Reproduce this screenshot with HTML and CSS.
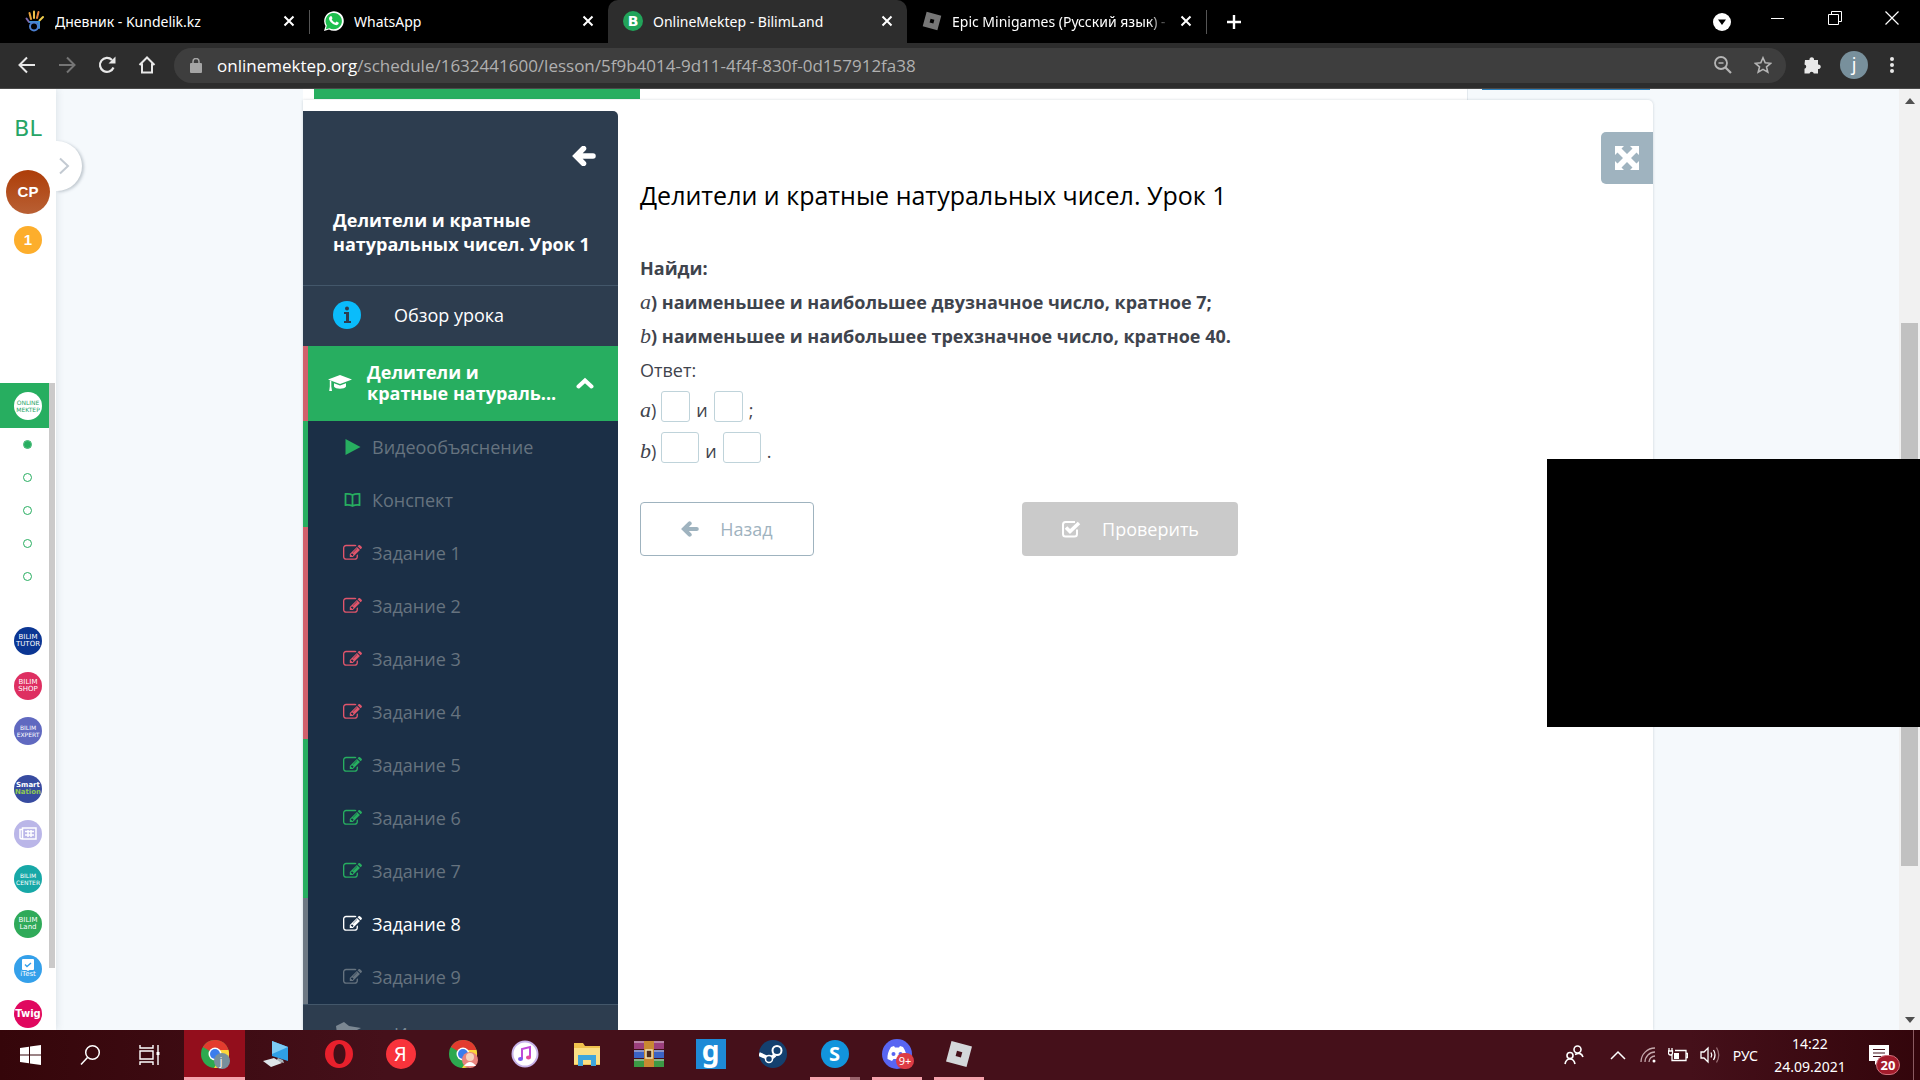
FILE: index.html
```
<!DOCTYPE html>
<html lang="ru">
<head>
    <meta charset="utf-8">
    <title>OnlineMektep - BilimLand</title>
    <link rel="stylesheet" href="styles.css">
</head>
<body>
    <!-- shared icons -->
    <svg class="defs" width="0" height="0">
        <symbol id="i-x" viewBox="0 0 12 12"><path d="M1.5 1.5l9 9M10.500 1.500l-9 9" stroke="currentColor" stroke-width="2" fill="none"/></symbol>
        <symbol id="i-edit" viewBox="0 0 1792 1792"><path fill="currentColor" d="M888 1184l116-116-152-152-116 116v56h96v96h56zm440-720q-16-16-33 1l-350 350q-17 17-1 33t33-1l350-350q17-17 1-33zm80 594v190q0 119-84.500 203.500t-203.500 84.500h-832q-119 0-203.500-84.500t-84.500-203.500v-832q0-119 84.500-203.500t203.500-84.500h832q63 0 117 25 15 7 18 23 3 17-9 29l-49 49q-14 14-32 8-23-6-45-6h-832q-66 0-113 47t-47 113v832q0 66 47 113t113 47h832q66 0 113-47t47-113v-126q0-13 9-22l64-64q15-15 35-7t20 29zm-96-738l288 288-672 672h-288v-288zm444 132l-92 92-288-288 92-92q28-28 68-28t68 28l152 152q28 28 28 68t-28 68z"/></symbol>
        <symbol id="i-left" viewBox="0 0 24 20"><path d="M11.500 2.500L4 10l7.500 7.500M5 10h16" stroke="currentColor" stroke-width="5.500" stroke-linecap="round" fill="none"/><path d="M1 10l6-6v12z" fill="currentColor"/></symbol>
        <symbol id="i-roblox" viewBox="0 0 28 28"><path fill="currentColor" fill-rule="evenodd" d="M6.500 1L27 6.500 21.500 27 1 21.500zM12 10.800l-1.400 5.200 5.300 1.400 1.400-5.200z"/></symbol>
        <symbol id="i-chrome" viewBox="0 0 30 30"><circle cx="15" cy="15" r="14" fill="#2da94f"/><path d="M15 15L2.900 8A14 14 0 0 1 28.500 11z" fill="#e33b2e"/><path d="M28.500 11A14 14 0 0 1 14 29l7-11-3-7z" fill="#fdd63a"/><circle cx="15" cy="15" r="6.500" fill="#fff"/><circle cx="15" cy="15" r="5" fill="#3b7ded"/></symbol>
    </svg>

    <header class="browser">
        <div class="tabs">
            <div class="tab">
                <svg width="20" height="22" viewBox="0 0 20 22" fill="none" stroke-width="2" stroke-linecap="round"><path d="M6 9L4.500 3" stroke="#e9a13b"/><path d="M9 8V1.500" stroke="#f0c04a"/><path d="M12 8l1.500-6" stroke="#e8843c"/><path d="M14.500 10.500L18 7" stroke="#f2d04d"/><path d="M4 12L1.500 8.500" stroke="#7e6bb0"/><path d="M5 12h9v6" stroke="#3d8fd0"/><circle cx="9" cy="16.500" r="4" stroke="#4c7fd0"/></svg>
                <span class="tab-title">Дневник - Kundelik.kz</span>
                <button class="tab-close" aria-label="Закрыть"><svg width="12" height="12"><use href="#i-x"/></svg></button>
            </div>
            <div class="tab divided">
                <svg width="20" height="20" viewBox="0 0 20 20"><path d="M0 20l1.500-5A9.800 9.800 0 1 1 5 18.500z" fill="#fff"/><path d="M1.800 18.200l1-3.600A8.200 8.200 0 1 1 5.500 17.200z" fill="#1fbf4f"/><path d="M6 5.500c.8-.8 1.500-.7 1.900.2l.6 1.500-.8 1.300c.9 1.600 2 2.500 3.700 3.200l1.200-1.200 2.200 1.200c0 2-1.800 2.700-3.300 2.400C8 13.300 5 9.600 5 7.600c0-.8.400-1.500 1-2.100z" fill="#fff"/></svg>
                <span class="tab-title">WhatsApp</span>
                <button class="tab-close" aria-label="Закрыть"><svg width="12" height="12"><use href="#i-x"/></svg></button>
            </div>
            <div class="tab active">
                <span class="bl-fav">B</span>
                <span class="tab-title">OnlineMektep - BilimLand</span>
                <button class="tab-close" aria-label="Закрыть"><svg width="12" height="12"><use href="#i-x"/></svg></button>
            </div>
            <div class="tab">
                <svg class="gray" width="20" height="20"><use href="#i-roblox"/></svg>
                <span class="tab-title fade">Epic Minigames (Русский язык) -</span>
                <button class="tab-close" aria-label="Закрыть"><svg width="12" height="12"><use href="#i-x"/></svg></button>
            </div>
            <button class="new-tab divided" aria-label="Новая вкладка"><svg width="16" height="16" viewBox="0 0 16 16"><path d="M8 1v14M1 8h14" stroke="#fff" stroke-width="2.400"/></svg></button>
            <div class="window-buttons">
                <svg class="guest" width="18" height="18" viewBox="0 0 18 18"><circle cx="9" cy="9" r="9" fill="#fff"/><path d="M5 6.500h8L9 12z" fill="#000"/></svg>
                <button aria-label="Свернуть"><svg width="14" height="14" viewBox="0 0 14 14"><path d="M0 7.500h13" stroke="#fff"/></svg></button>
                <button aria-label="Развернуть"><svg width="14" height="14" viewBox="0 0 14 14"><path d="M.5 3.500h10v10H.5zM3.500 3.500v-3h10v10h-3" stroke="#fff" fill="none"/></svg></button>
                <button aria-label="Закрыть"><svg width="14" height="14" viewBox="0 0 14 14"><path d="M.5.5l13 13M13.500.5l-13 13" stroke="#fff" stroke-width="1.200"/></svg></button>
            </div>
        </div>
        <div class="toolbar">
            <button aria-label="Назад"><svg width="18" height="18" viewBox="0 0 18 18"><path d="M17 9H2M9 1.500L1.500 9 9 16.500" stroke="#e8e8e8" stroke-width="2" fill="none"/></svg></button>
            <button aria-label="Вперёд"><svg width="18" height="18" viewBox="0 0 18 18"><path d="M1 9h15M9 1.500L16.500 9 9 16.500" stroke="#757575" stroke-width="2" fill="none"/></svg></button>
            <button aria-label="Обновить"><svg width="18" height="18" viewBox="0 0 18 18"><path d="M15.500 11.500A7 7 0 1 1 14 4" stroke="#e8e8e8" stroke-width="2.200" fill="none"/><path d="M17.500.5v7h-7z" fill="#e8e8e8"/></svg></button>
            <button aria-label="Домой"><svg width="18" height="18" viewBox="0 0 18 18"><path d="M1.500 9L9 1.500 16.500 9M4 7.500V16.500h10V7.500" stroke="#e8e8e8" stroke-width="2" fill="none"/></svg></button>
            <div class="omnibox">
                <svg width="12" height="15" viewBox="0 0 12 15"><rect y="5" width="12" height="10" rx="1" fill="#a5a5a5"/><path d="M3 6V3.500a3 3 0 0 1 6 0V6" stroke="#a5a5a5" stroke-width="1.500" fill="none"/></svg>
                <span class="url">onlinemektep.org<span>/schedule/1632441600/lesson/5f9b4014-9d11-4f4f-830f-0d157912fa38</span></span>
                <svg width="18" height="18" viewBox="0 0 18 18" fill="none" stroke="#b5b5b5"><circle cx="7" cy="7" r="6" stroke-width="1.800"/><path d="M11.500 11.500l5.500 5.500" stroke-width="2.200"/><path d="M4.500 7h5" stroke-width="1.500"/></svg>
                <svg width="18" height="18" viewBox="0 0 18 18"><path d="M9 1.800l2.200 5 5.400.5-4.100 3.600 1.300 5.300L9 13.400l-4.800 2.800 1.300-5.300-4.100-3.600 5.400-.5z" stroke="#b5b5b5" stroke-width="1.600" fill="none"/></svg>
            </div>
            <button aria-label="Расширения"><svg width="18" height="18" viewBox="0 0 18 18"><path fill="#e8e8e8" d="M1 4h4.500a2.300 2.300 0 1 1 4.500 0H14v4.500a2.300 2.300 0 1 1 0 4.500v4.500H9.800a2.200 2.200 0 0 0-4.300 0H.5v-4.800a2.200 2.200 0 0 0 0-4.300z"/></svg></button>
            <span class="profile">j</span>
            <button aria-label="Меню"><svg width="4" height="18" viewBox="0 0 4 18" fill="#e8e8e8"><circle cx="2" cy="3" r="2"/><circle cx="2" cy="9" r="2"/><circle cx="2" cy="15" r="2"/></svg></button>
        </div>
    </header>

    <div class="page">
        <aside class="rail">
            <div class="rail-logo">BL</div>
            <div class="user">CP</div>
            <div class="badge">1</div>
            <div class="rail-scroll">
                <nav class="rail-list">
                    <a class="rail-item current"><span class="disc online">ONLINE<br>MEKTEP</span></a>
                    <a class="rail-dot on"></a>
                    <a class="rail-dot"></a>
                    <a class="rail-dot"></a>
                    <a class="rail-dot"></a>
                    <a class="rail-dot"></a>
                    <a class="rail-item group-first"><span class="disc tutor">BILIM<br>TUTOR</span></a>
                    <a class="rail-item"><span class="disc shop">BILIM<br>SHOP</span></a>
                    <a class="rail-item"><span class="disc expert">BILIM<br>EXPERT</span></a>
                    <a class="rail-item group-second"><span class="disc smart">Smart<br><b>Nation</b></span></a>
                    <a class="rail-item"><span class="disc news"><svg width="18" height="13" viewBox="0 0 18 13" fill="none" stroke="#fff" stroke-width="1.500"><path d="M3.500 1h13.500v11H3.500zM3.500 2.500H1V10.500c0 1 1 1.500 2.500 1.500M6 4.500h9M6 8h9M9 3v7M12 3v7"/></svg></span></a>
                    <a class="rail-item"><span class="disc center">BILIM<br>CENTER</span></a>
                    <a class="rail-item"><span class="disc land">BILIM<br>Land</span></a>
                    <a class="rail-item"><span class="disc itest"><svg width="12" height="12" viewBox="0 0 12 12"><path d="M1 0h10q1 0 1 1v9q0 1-1 1H7.500L6 12 4.500 11H1q-1 0-1-1V1q0-1 1-1z" fill="#fff"/><path d="M3 5.500l2 2L9 4" stroke="#34a0ea" stroke-width="1.400" fill="none"/></svg>iTest</span></a>
                    <a class="rail-item"><span class="disc twig">Twig</span></a>
                </nav>
                <div class="rail-bar"></div>
            </div>
            <button class="expand" aria-label="Развернуть меню"><svg width="12" height="18" viewBox="0 0 12 18"><path d="M2 1.500L10 9l-8 7.500" stroke="#c3cad2" stroke-width="2" fill="none"/></svg></button>
        </aside>

        <main class="main">
            <div class="previous">
                <div class="previous-card"><div class="previous-done"></div></div>
                <div class="previous-link"></div>
            </div>
            <section class="lesson">
                <aside class="plan">
                    <div class="plan-head">
                        <button class="plan-hide" aria-label="Скрыть"><svg width="24" height="20"><use href="#i-left"/></svg></button>
                        <h2>Делители и кратные натуральных чисел. Урок 1</h2>
                    </div>
                    <a class="plan-overview">
                        <svg width="28" height="28" viewBox="0 0 28 28"><circle cx="14" cy="14" r="14" fill="#0abcfb"/><path d="M11 11h5v9h2v2h-7v-2h2v-7h-2z" fill="#2d3d4f"/><circle cx="14" cy="7.500" r="2" fill="#2d3d4f"/></svg>
                        <span>Обзор урока</span>
                    </a>
                    <button class="plan-topic">
                        <svg width="24" height="18" viewBox="0 0 24 18" fill="#fff"><path d="M12 1l12 4.500-12 4.500L0 5.500z"/><path d="M6 9.300l6 2.200 6-2.200v3.200c-1.500 3-10.500 3-12 0zM1.800 6.500h1.500v6l.7 4.500H1.200l.6-4.500z"/></svg>
                        <span>Делители и<br>кратные натураль...</span>
                        <svg width="18" height="12" viewBox="0 0 18 12"><path d="M2.500 9.500L9 3.500l6.500 6" stroke="#fff" stroke-width="4" stroke-linecap="round" fill="none"/></svg>
                    </button>
                    <nav class="steps">
                        <a class="step done"><svg width="18" height="18" viewBox="0 0 18 18"><path d="M2 1l15 8-15 8z" fill="currentColor"/></svg>Видеообъяснение</a>
                        <a class="step done"><svg width="18" height="18" viewBox="0 0 18 18"><path d="M2 3q4-.5 7 1 3-1.500 7-1v11q-4-.5-7 1-3-1.500-7-1zM9 4v11" stroke="currentColor" stroke-width="1.800" fill="none"/></svg>Конспект</a>
                        <a class="step failed"><svg width="20" height="20"><use href="#i-edit"/></svg>Задание 1</a>
                        <a class="step failed"><svg width="20" height="20"><use href="#i-edit"/></svg>Задание 2</a>
                        <a class="step failed"><svg width="20" height="20"><use href="#i-edit"/></svg>Задание 3</a>
                        <a class="step failed"><svg width="20" height="20"><use href="#i-edit"/></svg>Задание 4</a>
                        <a class="step done"><svg width="20" height="20"><use href="#i-edit"/></svg>Задание 5</a>
                        <a class="step done"><svg width="20" height="20"><use href="#i-edit"/></svg>Задание 6</a>
                        <a class="step done"><svg width="20" height="20"><use href="#i-edit"/></svg>Задание 7</a>
                        <a class="step here"><svg width="20" height="20"><use href="#i-edit"/></svg>Задание 8</a>
                        <a class="step"><svg width="20" height="20"><use href="#i-edit"/></svg>Задание 9</a>
                    </nav>
                    <a class="plan-more">
                        <svg width="26" height="18" viewBox="0 0 26 18"><path d="M0 4l8-4 5 4 12 2-6 3v9H2z" fill="#7b8792"/></svg>
                        <span>Итоги</span>
                    </a>
                </aside>

                <article class="task">
                    <h1>Делители и кратные натуральных чисел. Урок 1</h1>
                    <div class="question">
                        <p>Найди:</p>
                        <p><i>a</i>) наименьшее и наибольшее двузначное число, кратное 7;</p>
                        <p><i>b</i>) наименьшее и наибольшее трехзначное число, кратное 40.</p>
                    </div>
                    <p class="answer-label">Ответ:</p>
                    <div class="answer"><span><i>a</i>)</span><input type="text" aria-label="a, наименьшее"><span class="and">и</span><input type="text" aria-label="a, наибольшее"><span class="and">;</span></div>
                    <div class="answer wide"><span><i>b</i>)</span><input type="text" aria-label="b, наименьшее"><span class="and">и</span><input type="text" aria-label="b, наибольшее"><span class="and">.</span></div>
                    <div class="actions">
                        <button class="back"><svg width="18" height="16"><use href="#i-left"/></svg>Назад</button>
                        <button class="check"><svg width="20" height="18" viewBox="0 0 20 18"><path d="M16 9.500V14a2.500 2.500 0 0 1-2.500 2.500h-9A2.500 2.500 0 0 1 2 14V4.500A2.500 2.500 0 0 1 4.500 2H14" stroke="#fff" stroke-width="2" fill="none"/><path d="M5 7.500l4 4 9-8.500" stroke="#fff" stroke-width="3.600" fill="none"/></svg>Проверить</button>
                    </div>
                </article>
                <button class="fullscreen" aria-label="На весь экран"><svg width="24" height="24" viewBox="0 0 24 24"><path d="M0 0h9L6.500 2.500 12 8l5.500-5.500L15 0h9v9l-2.500-2.500L16 12l5.500 5.500L24 15v9h-9l2.500-2.500L12 16l-5.500 5.500L9 24H0v-9l2.500 2.500L8 12 2.500 6.500 0 9z" fill="#fff"/></svg></button>
            </section>
        </main>

        <div class="scrollbar">
            <svg width="10" height="6" viewBox="0 0 10 6"><path d="M5 0l5 6H0z" fill="#505050"/></svg>
            <div class="scroll-track"><div class="scroll-thumb"></div></div>
            <svg width="10" height="6" viewBox="0 0 10 6"><path d="M5 6L0 0h10z" fill="#505050"/></svg>
        </div>
        <div class="blackout"></div>
    </div>

    <footer class="taskbar">
        <button class="sys" aria-label="Пуск"><svg width="21" height="20" viewBox="0 0 21 20" fill="#fff"><path d="M0 3l9-1.300v7.800H0zM10 1.500L21 0v9.500H10zM0 10.500h9v7.800L0 17zM10 10.500h11V20l-11-1.500z"/></svg></button>
        <button class="sys" aria-label="Поиск"><svg width="22" height="22" viewBox="0 0 22 22" fill="none" stroke="#fff" stroke-width="1.500"><circle cx="13.500" cy="8.500" r="6.800"/><path d="M8.500 13.500L2 20.500"/></svg></button>
        <button class="sys" aria-label="Представление задач"><svg width="22" height="20" viewBox="0 0 22 20" fill="none" stroke="#fff" stroke-width="1.400"><path d="M1 0v3h13V0M1 6h13v8H1zM1 20v-3h13v3M19 0v20"/><path d="M17.500 7h3v3h-3z" fill="#fff" stroke="none"/></svg></button>
        <div class="apps">
            <button class="app open front" aria-label="Chrome"><svg width="30" height="30"><use href="#i-chrome"/><circle cx="22" cy="22" r="8" fill="#78909c"/></svg><span class="app-tag">j</span></button>
            <button class="app" aria-label="Компьютер"><svg width="28" height="28" viewBox="0 0 28 28"><path d="M9 1l16 6v14L9 16z" fill="#2f9fe6"/><path d="M9 1l16 6L9 14z" fill="#7dcbf5"/><path d="M15 18l5 2 1 3-8-2z" fill="#aab4bb"/><path d="M0 21l11-3 8 5-11 4z" fill="#dfe5e9"/></svg></button>
            <button class="app" aria-label="Opera"><svg width="30" height="30" viewBox="0 0 30 30"><path fill="#e8202c" fill-rule="evenodd" d="M15 1a14 14 0 1 1 0 28 14 14 0 0 1 0-28zM15.500 5c-4 0-6 5-6 10s2 10 6 10 6-5 6-10-2-10-6-10z"/></svg></button>
            <button class="app" aria-label="Яндекс"><span class="round ya">Я</span></button>
            <button class="app" aria-label="Chrome"><svg width="30" height="30"><use href="#i-chrome"/><circle cx="22" cy="21" r="8" fill="#e9857e"/><circle cx="22" cy="18" r="4" fill="#f7d4bd"/><path d="M16 27q6-8 12 0z" fill="#fff"/></svg></button>
            <button class="app" aria-label="iTunes"><svg width="28" height="28" viewBox="0 0 28 28"><circle cx="14" cy="14" r="12.500" fill="#fff" stroke="#c7b3ea" stroke-width="2"/><path d="M11 19V9l8-2v10" stroke="#c04bd8" stroke-width="2" fill="none"/><ellipse cx="9.500" cy="19" rx="2.500" ry="2" fill="#7a5cf0"/><ellipse cx="17.500" cy="17.500" rx="2.500" ry="2" fill="#e8489b"/></svg></button>
            <button class="app" aria-label="Проводник"><svg width="28" height="24" viewBox="0 0 28 24"><path d="M1 1h9l2 3h15v19H1z" fill="#f0c24e"/><path d="M1 6h26v16H1z" fill="#fbdf85"/><path d="M5 24V13h18v11h-5v-6h-8v6z" fill="#3fa6dc"/></svg></button>
            <button class="app" aria-label="WinRAR"><svg width="30" height="26" viewBox="0 0 30 26"><path d="M0 0h30v8H0z" fill="#9c3f7c"/><path d="M0 9h30v8H0z" fill="#3b63c4"/><path d="M0 18h30v8H0z" fill="#3c9a45"/><path d="M0 1h30M0 10h30M0 19h30" stroke="#d8c9cf"/><path d="M10 0h10v26H10z" fill="#c88932"/><path d="M12 9h6v8h-6z" fill="#4a2b1c" stroke="#f0dfae" stroke-width="1.500"/></svg></button>
            <button class="app" aria-label="G"><span class="square-g">g</span></button>
            <button class="app" aria-label="Steam"><svg width="28" height="28" viewBox="0 0 28 28"><circle cx="14" cy="14" r="14" fill="#14406f"/><circle cx="18" cy="10.500" r="4.500" stroke="#fff" stroke-width="2" fill="none"/><path d="M0 14l11 5 5-4" stroke="#fff" stroke-width="4" fill="none"/><circle cx="10" cy="19" r="3.500" stroke="#fff" stroke-width="1.500" fill="#14406f"/></svg></button>
            <button class="app open stacked" aria-label="Skype"><span class="round skype">S</span></button>
            <button class="app open" aria-label="Discord"><svg width="30" height="30" viewBox="0 0 30 30"><circle cx="15" cy="15" r="15" fill="#5865f2"/><path d="M9 8l3-1 1 1.500h4L18 7l3 1q4 6 3.500 12L20 22l-1.500-2h-7L10 22l-4.500-2Q5 14 9 8z" fill="#fff"/><circle cx="11.500" cy="15" r="2" fill="#5865f2"/><circle cx="18.500" cy="15" r="2" fill="#5865f2"/></svg><span class="app-tag count">9+</span></button>
            <button class="app open" aria-label="Roblox"><svg class="silver" width="28" height="28"><use href="#i-roblox"/></svg></button>
        </div>
        <div class="tray">
            <svg width="20" height="20" viewBox="0 0 20 20" fill="none" stroke="#fff" stroke-width="1.600"><circle cx="13.500" cy="4.500" r="3.500"/><circle cx="6" cy="10.500" r="3"/><path d="M1 19q1-5 5-5t5 5M11 9.500q6-3 8 2.500"/></svg>
            <svg width="16" height="10" viewBox="0 0 16 10"><path d="M1 9l7-7 7 7" stroke="#fff" stroke-width="1.500" fill="none"/></svg>
            <svg width="16" height="16" viewBox="0 0 16 16" fill="none" stroke="#c5a9ad" stroke-width="1.300"><path d="M1 15A14 14 0 0 1 15 1M5 15A10 10 0 0 1 15 5M9 15a6 6 0 0 1 6-6" /><circle cx="14" cy="14" r="1.500" fill="#fff" stroke="none"/></svg>
            <svg width="20" height="14" viewBox="0 0 20 14" fill="none" stroke="#fff" stroke-width="1.300"><path d="M4 7v5.500h14V2.500H7M18.500 5.500h1v4h-1M1 0v3M4 0v3M.5 3h4v2a2 2 0 0 1-4 0z"/><path d="M6 5h5v6H6z" fill="#fff" stroke="none"/></svg>
            <svg width="20" height="18" viewBox="0 0 20 18" fill="none" stroke="#fff" stroke-width="1.300"><path d="M1 6h3l4-4v14l-4-4H1zM11 6.500q1.500 2.500 0 5M13.500 4q3 5 0 10"/><path d="M16.500 1.500q4.500 7.500 0 15" stroke="#9a7076"/></svg>
            <span class="lang">РУС</span>
            <div class="clock">14:22<br>24.09.2021</div>
            <div class="notes">
                <svg width="20" height="20" viewBox="0 0 20 20"><path d="M0 0h20v16H10l-4 4v-4H0z" fill="#fff"/><path d="M4 4.500h12M4 8h12M4 11.500h8" stroke="#45101a" stroke-width="1.200"/></svg>
                <span class="notes-count">20</span>
            </div>
        </div>
    </footer>
</body>
</html>
```

FILE: styles.css
```
* {
    box-sizing: border-box;
}

body {
    margin: 0;
    height: 100vh;
    display: flex;
    flex-direction: column;
    overflow: hidden;
    font-family: "Open Sans", "Noto Sans", sans-serif;
    font-size: 18px;
    color: #3f444d;
}

svg {
    display: block;
    flex: none;
}

.defs {
    position: absolute;
}

button {
    border: none;
    background: none;
    padding: 0;
    margin: 0;
    font: inherit;
    color: inherit;
    cursor: pointer;
    display: flex;
    align-items: center;
    justify-content: center;
}

h1, h2, p {
    margin: 0;
}

/* browser */
.browser {
    flex: none;
    background: #2d2d2d;
    border-bottom: 1px solid #4a4a4a;
    font-family: "Noto Sans", sans-serif;
    color: #fff;
}

.tabs {
    display: flex;
    height: 43px;
    background: #000;
    padding-left: 10px;
}

.tab {
    width: 299px;
    display: flex;
    align-items: center;
    gap: 10px;
    padding: 0 14px 1px 15px;
    font-size: 14px;
    white-space: nowrap;
}

.tab.active {
    background: #2d2d2d;
    border-radius: 10px 10px 0 0;
}

.tab-title {
    flex: 1;
    min-width: 0;
    overflow: hidden;
}

.fade {
    -webkit-mask-image: linear-gradient(90deg, #000 90%, transparent);
    mask-image: linear-gradient(90deg, #000 90%, transparent);
}

.divided {
    background: linear-gradient(#555, #555) left center / 1px 24px no-repeat;
}

.gray {
    color: #777;
}

.silver {
    color: #d4d7da;
}

.bl-fav {
    width: 20px;
    height: 20px;
    border-radius: 50%;
    background: #22a45a;
    font: bold 14px/20px "DejaVu Sans", sans-serif;
    text-align: center;
}

.new-tab {
    width: 56px;
}

.window-buttons {
    margin-left: auto;
    display: flex;
    height: 36px;
}

.window-buttons button {
    width: 57px;
}

.guest {
    margin: 13px 18px 0 0;
}

.toolbar {
    height: 45px;
    display: flex;
    align-items: center;
    gap: 22px;
    padding: 0 26px 1px 18px;
}

.omnibox {
    flex: 1;
    height: 35px;
    margin: 0 -4px;
    padding: 0 14px 0 16px;
    border-radius: 18px;
    background: #3e3e3e;
    display: flex;
    align-items: center;
    gap: 22px;
}

.url {
    flex: 1;
    font-family: "Open Sans", sans-serif;
    font-size: 17px;
    margin-left: -7px;
}

.url span {
    color: #b0b0b0;
}

.profile {
    width: 28px;
    height: 28px;
    margin-left: -4px;
    border-radius: 50%;
    background: #78909c;
    text-align: center;
    font-size: 18px;
    line-height: 26px;
}

/* page */
.page {
    flex: 1;
    min-height: 0;
    position: relative;
    display: flex;
    background: #f5f9fc;
    overflow: hidden;
}

.rail {
    position: relative;
    width: 56px;
    flex: none;
    display: flex;
    flex-direction: column;
    align-items: center;
    background: #fff;
    box-shadow: 0 0 8px rgba(40, 60, 80, .15);
    font-family: "Liberation Sans", sans-serif;
}

.rail-logo {
    margin-top: 25px;
    height: 30px;
    font: 22px/30px "DejaVu Sans", sans-serif;
    color: #27a566;
}

.user {
    margin-top: 26px;
    width: 44px;
    height: 44px;
    border-radius: 50%;
    background: linear-gradient(#ad3d08, #b96034);
    color: #fff;
    font-size: 15px;
    font-weight: bold;
    line-height: 44px;
    text-align: center;
}

.badge {
    margin-top: 12px;
    width: 28px;
    height: 28px;
    border-radius: 50%;
    background: #fdae2c;
    color: #fff;
    font-size: 15px;
    font-weight: bold;
    line-height: 28px;
    text-align: center;
}

.rail-scroll {
    margin-top: 129px;
    width: 100%;
    flex: 1;
    min-height: 0;
    overflow: hidden;
    display: flex;
}

.rail-list {
    flex: 1;
}

.rail-bar {
    width: 6px;
    height: 585px;
    margin-right: 1px;
    background: #cbcaca;
}

.rail-item {
    display: flex;
    align-items: center;
    height: 45px;
    padding-left: 14px;
}

.rail-item.current {
    background: #27ae60;
}

.rail-dot {
    display: block;
    width: 7px;
    height: 7px;
    margin: 13px 0 26px 24px;
    border-radius: 50%;
    outline: 1px solid #27ae60;
}

.rail-dot + .rail-dot {
    margin-top: 0;
}

.rail-dot.on {
    background: #27ae60;
}

.group-first {
    margin-top: 38px;
}

.group-second {
    margin-top: 13px;
}

.disc {
    width: 28px;
    height: 28px;
    border-radius: 50%;
    display: flex;
    flex-direction: column;
    align-items: center;
    justify-content: center;
    overflow: hidden;
    color: #fff;
    font: 7px/7px "DejaVu Sans", sans-serif;
    text-align: center;
}

.disc.online {
    background: #fff;
    color: #27a566;
    font-size: 6px;
}

.disc.tutor { background: #0b3693; }
.disc.shop { background: #de2f61; }
.disc.expert { background: #6069c0; font-size: 6px; }
.disc.smart { background: #374ba0; font-weight: bold; }
.disc.smart b { color: #8fc952; }
.disc.news { background: #bab6e8; }
.disc.center { background: #17a8a7; font-size: 6px; }
.disc.land { background: #2faa59; }
.disc.itest { background: #34a0ea; }
.disc.twig { background: #e0085f; font-size: 10px; font-weight: bold; }

.expand {
    position: absolute;
    left: 56px;
    top: 52px;
    width: 26px;
    height: 50px;
    padding-right: 10px;
    border-radius: 0 25px 25px 0;
    background: #fff;
    box-shadow: 2px 1px 3px rgba(40, 60, 80, .25);
    clip-path: inset(-4px -6px -4px 0);
}

.main {
    flex: 1;
    display: flex;
    flex-direction: column;
    margin: 0 267px 0 247px;
}

.previous {
    flex: none;
    height: 11px;
    display: flex;
}

.previous-card {
    flex: 1;
    padding-left: 11px;
    background: #fff;
    border-right: 1px solid #e3e9ee;
}

.previous-done {
    width: 326px;
    height: 10px;
    background: #27ae60;
}

.previous-link {
    width: 168px;
    height: 1px;
    margin: 0 3px 0 14px;
    background: #2a7db8;
}

.lesson {
    flex: 1;
    min-height: 0;
    position: relative;
    display: flex;
    padding-top: 11px;
    background: #fff;
    border-radius: 0 5px 0 0;
    box-shadow: 0 0 3px rgba(40, 60, 80, .2);
}

.plan {
    width: 315px;
    flex: none;
    overflow: hidden;
    background: #2d3d4f;
    border-radius: 0 5px 0 0;
    color: #fff;
}

.plan-head {
    height: 175px;
    padding: 35px 22px 0 30px;
    border-bottom: 1px solid #43576a;
}

.plan-head h2 {
    margin-top: 42px;
    font-size: 18px;
    line-height: 24px;
}

.plan-hide {
    margin-left: auto;
}

.plan-overview {
    display: flex;
    align-items: center;
    gap: 33px;
    height: 60px;
    padding: 0 0 2px 30px;
    font-size: 18px;
}

.plan-topic {
    width: 100%;
    height: 75px;
    padding: 0 24px 2px 20px;
    border-left: 5px solid #d1606c;
    background: #27ae60;
    gap: 15px;
    font-size: 18px;
    font-weight: bold;
    line-height: 21px;
    text-align: left;
}

.plan-topic span {
    flex: 1;
    white-space: nowrap;
}

.steps {
    background: #1b2f46;
}

.step {
    display: flex;
    align-items: center;
    gap: 10px;
    height: 53px;
    padding: 0 0 1px 35px;
    border-left: 5px solid #6d7883;
    font-size: 18px;
    color: #66737f;
}

.step svg {
    width: 19px;
}

.step.done { border-color: #27ae60; }
.step.done svg { color: #27ae60; }
.step.failed { border-color: #d1606c; }
.step.failed svg { color: #e0556b; }
.step.here { color: #fff; }

.plan-more {
    display: flex;
    gap: 32px;
    padding: 17px 0 0 33px;
    border-top: 1px solid #43576a;
    color: #7b8792;
    font-size: 18px;
}

/* task */
.task {
    flex: 1;
    padding: 65px 0 0 22px;
}

.task h1 {
    font-size: 25px;
    font-weight: normal;
    line-height: 38px;
    color: #000;
    margin-bottom: 37px;
}

.question {
    font-weight: bold;
}

.question p,
.answer-label {
    font-size: 18px;
    line-height: 34px;
}

.task i {
    font: italic 22px/20px "Liberation Serif", serif;
}

.answer {
    display: flex;
    align-items: flex-end;
    height: 31px;
    margin: 4px 0 10px;
    line-height: 24px;
}

.answer input {
    width: 29px;
    height: 31px;
    margin-left: 5px;
    padding: 0 4px;
    border: 1px solid #bfd3da;
    border-radius: 3px;
    background: #fff;
    font: inherit;
}

.answer.wide input {
    width: 38px;
}

.answer .and {
    margin: 0 1px 0 6px;
}

.actions {
    display: flex;
    justify-content: space-between;
    width: 598px;
    margin-top: 39px;
}

.actions button {
    height: 54px;
    gap: 21px;
    border-radius: 4px;
    font-size: 18px;
}

.back {
    width: 174px;
    border: 1px solid #9fb3bf;
    color: #9fb3bf;
}

.check {
    width: 216px;
    background: #cacaca;
    color: #fff;
}

.fullscreen {
    position: absolute;
    top: 32px;
    right: 0;
    width: 52px;
    height: 52px;
    border-radius: 5px 0 0 5px;
    background: #9fb3bf;
}

.scrollbar {
    position: absolute;
    top: 0;
    right: 0;
    bottom: 0;
    width: 21px;
    padding: 9px 0 7px;
    display: flex;
    flex-direction: column;
    align-items: center;
    background: #f1f1f1;
}

.scroll-track {
    flex: 1;
    width: 17px;
    padding-top: 219px;
}

.scroll-thumb {
    height: 543px;
    background: #c1c1c1;
}

.blackout {
    position: absolute;
    top: 370px;
    right: 0;
    width: 373px;
    height: 268px;
    background: #000;
}

/* taskbar */
.taskbar {
    flex: none;
    height: 50px;
    display: flex;
    background: linear-gradient(90deg, #35060a, #45101a 20%, #45101a 88%, #33050b);
    color: #fff;
    font-family: "Noto Sans", sans-serif;
}

.sys {
    width: 60px;
}

.apps {
    display: flex;
    gap: 1px;
    padding-left: 4px;
}

.app {
    position: relative;
    width: 61px;
    border-bottom: 3px solid transparent;
}

.app.open {
    background: linear-gradient(#f5a3ad, #f5a3ad) center bottom / 50px 3px no-repeat border-box;
}

.app.stacked {
    background: linear-gradient(90deg, #f5a3ad 40px, #98636b 40px) center bottom / 50px 3px no-repeat border-box;
}

.app.front {
    background: #930e1c;
    border-bottom-color: #f5a3ad;
}

.app-tag {
    position: absolute;
    left: 29px;
    top: 23px;
    width: 16px;
    height: 16px;
    font-size: 10px;
    line-height: 16px;
}

.app-tag.count {
    left: 30px;
    width: 18px;
    border-radius: 9px;
    background: #dd3c45;
    font-size: 11px;
}

.round {
    width: 30px;
    height: 30px;
    border-radius: 50%;
    font-size: 20px;
    line-height: 29px;
}

.ya {
    background: #f8333b;
}

.skype {
    width: 28px;
    height: 28px;
    background: #1294dc;
    line-height: 27px;
    font-weight: bold;
}

.square-g {
    width: 30px;
    height: 30px;
    background: #1e8ad6;
    font-size: 28px;
    font-weight: bold;
    line-height: 22px;
}

.tray {
    margin-left: auto;
    display: flex;
    align-items: center;
    gap: 12px;
    padding-right: 6px;
}

.tray > svg:first-child {
    margin-right: 14px;
}

.tray > svg:nth-child(2) {
    margin-right: 2px;
}

.lang {
    font-size: 14px;
    margin-left: 1px;
}

.clock {
    width: 80px;
    font-size: 14px;
    line-height: 23px;
    text-align: center;
}

.notes {
    position: relative;
    align-self: stretch;
    width: 52px;
    padding: 15px 0 0 7px;
    border-right: 1px solid #8a5a60;
}

.notes-count {
    position: absolute;
    left: 14px;
    top: 25px;
    width: 24px;
    height: 20px;
    border: 1px solid #d0707c;
    border-radius: 10px;
    background: #a31b2b;
    font-size: 13px;
    font-weight: bold;
    line-height: 18px;
    text-align: center;
}
```
